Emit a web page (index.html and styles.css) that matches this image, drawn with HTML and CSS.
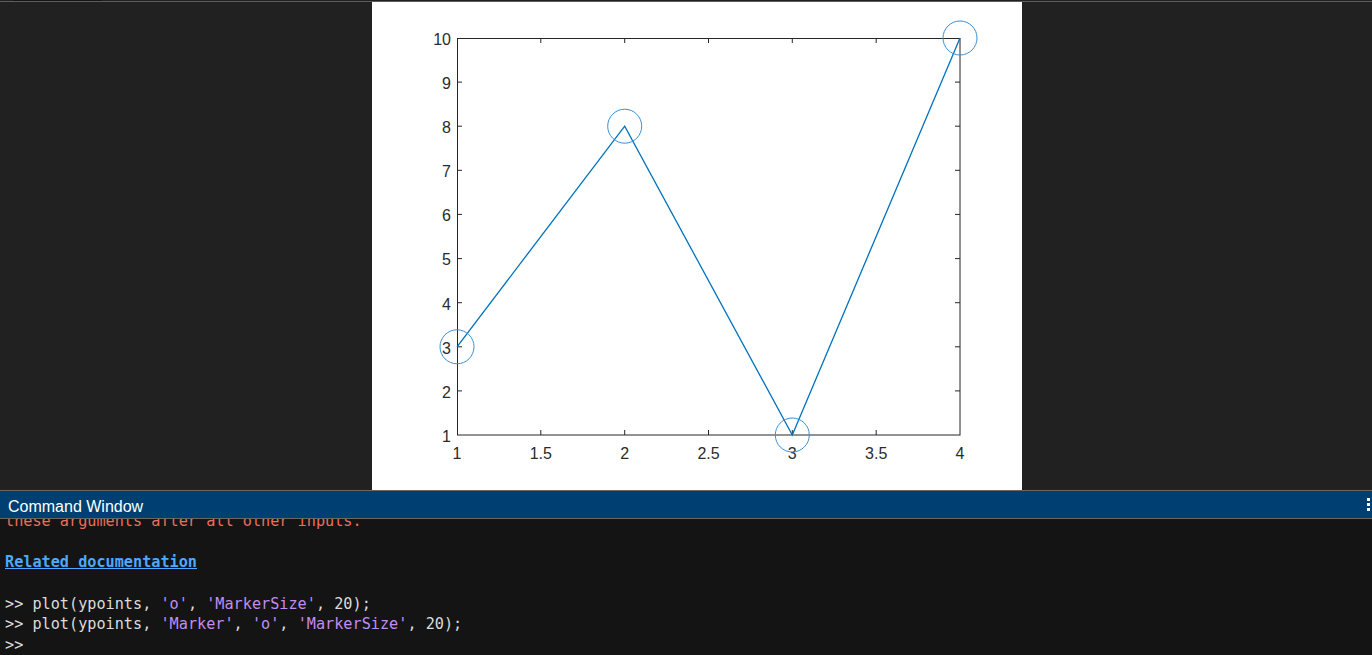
FILE: index.html
```html
<!DOCTYPE html>
<html>
<head>
<meta charset="utf-8">
<link rel="stylesheet" href="styles.css">
</head>
<body>
<div class="app">
  <div class="tabstrip"><div class="tab"></div></div>
  <div class="tabline"></div>
  <div class="figure-area">
    <div class="figure">
      <svg class="plot" width="650" height="488" viewBox="0 0 650 488">
        <g class="ticks" stroke="#262626" stroke-width="1">
          <line x1="168.8" y1="433" x2="168.8" y2="428"/>
          <line x1="252.7" y1="433" x2="252.7" y2="428"/>
          <line x1="336.5" y1="433" x2="336.5" y2="428"/>
          <line x1="420.3" y1="433" x2="420.3" y2="428"/>
          <line x1="504.2" y1="433" x2="504.2" y2="428"/>
          <line x1="168.8" y1="36" x2="168.8" y2="41"/>
          <line x1="252.7" y1="36" x2="252.7" y2="41"/>
          <line x1="336.5" y1="36" x2="336.5" y2="41"/>
          <line x1="420.3" y1="36" x2="420.3" y2="41"/>
          <line x1="504.2" y1="36" x2="504.2" y2="41"/>
          <line x1="85" y1="80.1" x2="90" y2="80.1"/>
          <line x1="85" y1="124.2" x2="90" y2="124.2"/>
          <line x1="85" y1="168.3" x2="90" y2="168.3"/>
          <line x1="85" y1="212.4" x2="90" y2="212.4"/>
          <line x1="85" y1="256.6" x2="90" y2="256.6"/>
          <line x1="85" y1="300.7" x2="90" y2="300.7"/>
          <line x1="85" y1="344.8" x2="90" y2="344.8"/>
          <line x1="85" y1="388.9" x2="90" y2="388.9"/>
          <line x1="588" y1="80.1" x2="583" y2="80.1"/>
          <line x1="588" y1="124.2" x2="583" y2="124.2"/>
          <line x1="588" y1="168.3" x2="583" y2="168.3"/>
          <line x1="588" y1="212.4" x2="583" y2="212.4"/>
          <line x1="588" y1="256.6" x2="583" y2="256.6"/>
          <line x1="588" y1="300.7" x2="583" y2="300.7"/>
          <line x1="588" y1="344.8" x2="583" y2="344.8"/>
          <line x1="588" y1="388.9" x2="583" y2="388.9"/>
        </g>
        <rect x="85.5" y="36.5" width="502.5" height="396.5" fill="none" stroke="#262626" stroke-width="1"/>
        <g class="ylabels" text-anchor="end">
          <text x="79" y="43">10</text>
          <text x="79" y="87">9</text>
          <text x="79" y="131">8</text>
          <text x="79" y="175">7</text>
          <text x="79" y="219">6</text>
          <text x="79" y="263">5</text>
          <text x="79" y="308">4</text>
          <text x="79" y="352">3</text>
          <text x="79" y="396">2</text>
          <text x="79" y="440">1</text>
        </g>
        <g class="xlabels" text-anchor="middle">
          <text x="85" y="457">1</text>
          <text x="168.8" y="457">1.5</text>
          <text x="252.7" y="457">2</text>
          <text x="336.5" y="457">2.5</text>
          <text x="420.3" y="457">3</text>
          <text x="504.2" y="457">3.5</text>
          <text x="588" y="457">4</text>
        </g>
        <polyline points="85,344.8 252.7,124.2 420.3,433 588,36" fill="none" stroke="#0072bd" stroke-width="1.3"/>
        <g fill="none" stroke="#3a8fd2" stroke-width="1">
          <circle cx="85" cy="344.8" r="17"/>
          <circle cx="252.7" cy="124.2" r="17"/>
          <circle cx="420.3" cy="433" r="17"/>
          <circle cx="588" cy="36" r="17"/>
        </g>
      </svg>
    </div>
  </div>
  <div class="cw-header">
    <span class="cw-title">Command Window</span>
    <span class="kebab"><i></i><i></i><i></i></span>
  </div>
  <div class="cw-body">
    <div class="cw-content">
      <div class="line err">these arguments after all other inputs.</div>
      <div class="line">&nbsp;</div>
      <div class="line"><a class="doclink">Related documentation</a></div>
      <div class="line">&nbsp;</div>
      <div class="line">&gt;&gt; plot(ypoints, <span class="str">'o'</span>, <span class="str">'MarkerSize'</span>, 20);</div>
      <div class="line">&gt;&gt; plot(ypoints, <span class="str">'Marker'</span>, <span class="str">'o'</span>, <span class="str">'MarkerSize'</span>, 20);</div>
      <div class="line">&gt;&gt; </div>
    </div>
  </div>
</div>
</body>
</html>
```

FILE: styles.css
```css
html, body {
  margin: 0;
  padding: 0;
  background: #212121;
  width: 1372px;
  height: 655px;
  overflow: hidden;
}

.app {
  display: flex;
  flex-direction: column;
  height: 655px;
}

.tabstrip {
  height: 1px;
  background: #212121;
  display: flex;
}

.tab {
  margin-left: 13px;
  width: 89px;
  height: 1px;
  background: #141414;
}

.tabline {
  height: 1px;
  background: #5c5c5c;
}

.figure-area {
  height: 488px;
  flex-shrink: 0;
  display: flex;
  background: #212121;
}

.figure {
  margin-left: 372px;
  width: 650px;
  height: 488px;
  background: #ffffff;
}

.plot {
  display: block;
}

.plot text {
  font-family: "Liberation Sans", Arial, sans-serif;
  font-size: 16px;
  fill: #2b2b2b;
}

.cw-header {
  height: 27px;
  flex-shrink: 0;
  border-top: 1px solid #676767;
  border-bottom: 1px solid #676767;
  background: #003f72;
  display: flex;
  align-items: center;
  justify-content: space-between;
}

.cw-title {
  margin-left: 8px;
  padding-top: 5px;
  font-family: "Liberation Sans", Arial, sans-serif;
  font-size: 16px;
  color: #ffffff;
}

.kebab {
  display: flex;
  flex-direction: column;
  gap: 2px;
  margin-right: 2px;
}

.kebab i {
  display: block;
  width: 3px;
  height: 3px;
  background: #ffffff;
}

.cw-body {
  flex: 1;
  background: #141414;
  overflow: hidden;
}

.cw-content {
  margin-top: -8px;
  padding-left: 5px;
  font-family: "DejaVu Sans Mono", "Liberation Mono", monospace;
  font-size: 15.2px;
  line-height: 20.7px;
  color: #dcdcdc;
}

.line {
  white-space: pre;
  height: 20.7px;
}

.err {
  color: #f26b5d;
}

.doclink {
  color: #4da8ff;
  font-weight: bold;
  text-decoration: underline;
}

.str {
  color: #c28cf2;
}
```
